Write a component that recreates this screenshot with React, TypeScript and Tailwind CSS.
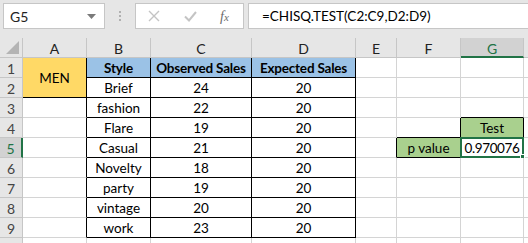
import { JSX } from 'react';

const FONT = { fontFamily: 'Lato, "Open Sans", sans-serif' };

const colLetters = ['A', 'B', 'C', 'D', 'E', 'F', 'G'];

type CellDef = {
  text?: string;
  bg?: string;
  bold?: boolean;
  r?: boolean; // black right border
  b?: boolean; // black bottom border
  span?: boolean;
  selected?: boolean;
};

const styles = ['Brief', 'fashion', 'Flare', 'Casual', 'Novelty', 'party', 'vintage', 'work'];
const observed = ['24', '22', '19', '21', '18', '19', '20', '23'];

function buildRow(n: number): (CellDef | null)[] {
  // cells for A..G; null = covered by the merged A1:A2
  const row: (CellDef | null)[] = [];
  if (n === 1) row.push({ text: 'MEN', bg: 'yellow', r: true, b: true, span: true });
  else if (n === 2) row.push(null);
  else row.push({ r: true });
  if (n === 1) {
    row.push({ text: 'Style', bg: 'blue', bold: true, r: true, b: true });
    row.push({ text: 'Observed Sales', bg: 'blue', bold: true, r: true, b: true });
    row.push({ text: 'Expected Sales', bg: 'blue', bold: true, r: true, b: true });
  } else {
    row.push({ text: styles[n - 2], r: true, b: true });
    row.push({ text: observed[n - 2], r: true, b: true });
    row.push({ text: '20', r: true, b: true });
  }
  // E
  row.push({ r: n === 5 });
  // F
  if (n === 4) row.push({ r: true, b: true });
  else if (n === 5) row.push({ text: 'p value', bg: 'green', r: true, b: true });
  else row.push({});
  // G
  if (n === 3) row.push({ b: true });
  else if (n === 4) row.push({ text: 'Test', bg: 'green', r: true, b: true });
  else if (n === 5) row.push({ text: '0.970076', selected: true, r: true });
  else row.push({});
  return row;
}

function Cell({ c }: { c: CellDef }): JSX.Element {
  const bg =
    c.bg === 'yellow'
      ? 'bg-[#ffd966]'
      : c.bg === 'blue'
        ? 'bg-[#9bc2e6]'
        : c.bg === 'green'
          ? 'bg-[#a9d08e]'
          : 'bg-white';
  return (
    <div
      className={`relative flex items-center justify-center whitespace-nowrap border-r border-b pt-[2px] text-[13.5px] leading-none text-black ${bg} ${
        c.r ? 'border-r-black' : 'border-r-[#d4d4d4]'
      } ${c.b ? 'border-b-black' : 'border-b-[#d4d4d4]'} ${c.bold ? 'font-bold tracking-[-0.2px]' : ''} ${
        c.span ? 'row-span-2' : ''
      } ${c.selected ? 'tracking-[-0.4px]' : ''}`}
    >
      {c.text}
      {c.selected && (
        <div className="absolute -top-px -left-px -right-px -bottom-px border-2 border-[#217346]">
          <div className="absolute -right-[3px] -bottom-[3px] h-[5px] w-[5px] border border-white bg-[#217346]" />
        </div>
      )}
    </div>
  );
}

function FormulaBar(): JSX.Element {
  return (
    <div className="flex h-[38px] items-start bg-[#e6e6e6] pt-[3px]">
      <div className="ml-[3px] flex h-[26px] w-[102px] items-center justify-between border border-[#c6c6c6] bg-white pl-[6px] pr-[8px]">
        <span className="pt-[1px] text-[14px] text-[#222]">G5</span>
        <svg width="9" height="5" viewBox="0 0 9 5">
          <path d="M0 0 L9 0 L4.5 5 Z" fill="#7a7a7a" />
        </svg>
      </div>
      <div className="flex h-[26px] w-[30px] flex-col items-center justify-center gap-[2px]">
        <div className="h-[2px] w-[2px] bg-[#b0b0b0]" />
        <div className="h-[2px] w-[2px] bg-[#b0b0b0]" />
        <div className="h-[2px] w-[2px] bg-[#b0b0b0]" />
      </div>
      <div className="flex h-[26px] w-[109px] items-center border border-[#c6c6c6] bg-white">
        <svg className="ml-[12px]" width="12" height="12" viewBox="0 0 12 12">
          <path d="M1 1 L11 11 M11 1 L1 11" stroke="#c4c4c4" strokeWidth="1.4" />
        </svg>
        <svg className="ml-[24px]" width="13" height="11" viewBox="0 0 13 11">
          <path d="M1 5.5 L5 9.5 L12 1" stroke="#c4c4c4" strokeWidth="2" fill="none" />
        </svg>
        <span
          className="ml-[23px] text-[14px] italic text-[#6b6b6b]"
          style={{ fontFamily: '"Liberation Serif", serif' }}
        >
          f<span className="text-[11px]">x</span>
        </span>
      </div>
      <div className="ml-[4px] flex h-[26px] flex-1 items-center whitespace-nowrap border-y border-l border-[#c6c6c6] bg-white pl-[13px] pt-[1px] text-[13.5px] text-black">
        =CHISQ.TEST(C2:C9,D2:D9)
      </div>
    </div>
  );
}

export default function App(): JSX.Element {
  const rows = [1, 2, 3, 4, 5, 6, 7, 8, 9];
  return (
    <div className="h-[243px] w-[528px] overflow-hidden bg-white" style={FONT}>
      <FormulaBar />
      <div className="grid grid-cols-[23px_64px_64px_101px_104px_41px_64px_63px_4px] grid-rows-[20px_repeat(9,20px)_5px]">
        {/* corner */}
        <div className="flex items-end justify-end border-r border-b border-[#c6c6c6] bg-[#e6e6e6] pr-[3px] pb-[3px]">
          <svg width="13" height="13" viewBox="0 0 13 13">
            <path d="M13 0 L13 13 L0 13 Z" fill="#b4b4b4" />
          </svg>
        </div>
        {colLetters.map((l) =>
          l === 'G' ? (
            <div
              key={l}
              className="flex items-center justify-center border-r border-b-2 border-r-[#c6c6c6] border-b-[#217346] bg-[#d2d2d2] pt-[2px] text-[14px] text-[#217346]"
            >
              {l}
            </div>
          ) : (
            <div
              key={l}
              className="flex items-center justify-center border-r border-b border-[#c6c6c6] bg-[#e6e6e6] pt-[1px] text-[14px] text-[#222]"
            >
              {l}
            </div>
          ),
        )}
        <div className="border-b border-[#c6c6c6] bg-[#e6e6e6]" />

        {rows.map((n) => [
          n === 5 ? (
            <div
              key={`h${n}`}
              className="flex items-center justify-center border-r-2 border-b border-r-[#217346] border-b-[#c6c6c6] bg-[#d2d2d2] pt-[2px] text-[14px] text-[#217346]"
            >
              {n}
            </div>
          ) : (
            <div
              key={`h${n}`}
              className="flex items-center justify-center border-r border-b border-[#c6c6c6] bg-[#e6e6e6] pt-[2px] text-[14px] text-[#444]"
            >
              {n}
            </div>
          ),
          ...buildRow(n).map((c, i) => (c ? <Cell key={`${n}-${i}`} c={c} /> : null)),
          <div key={`t${n}`} className="border-b border-[#d4d4d4] bg-white" />,
        ])}

        {/* partial row 10 */}
        <div className="border-r border-[#c6c6c6] bg-[#e6e6e6]" />
        <div className="border-r border-[#d4d4d4]" />
        <div className="border-r border-[#d4d4d4]" />
        <div className="border-r border-[#d4d4d4]" />
        <div className="border-r border-[#d4d4d4]" />
        <div className="border-r border-[#d4d4d4]" />
        <div className="border-r border-[#d4d4d4]" />
        <div className="border-r border-[#d4d4d4]" />
        <div />
      </div>
    </div>
  );
}
